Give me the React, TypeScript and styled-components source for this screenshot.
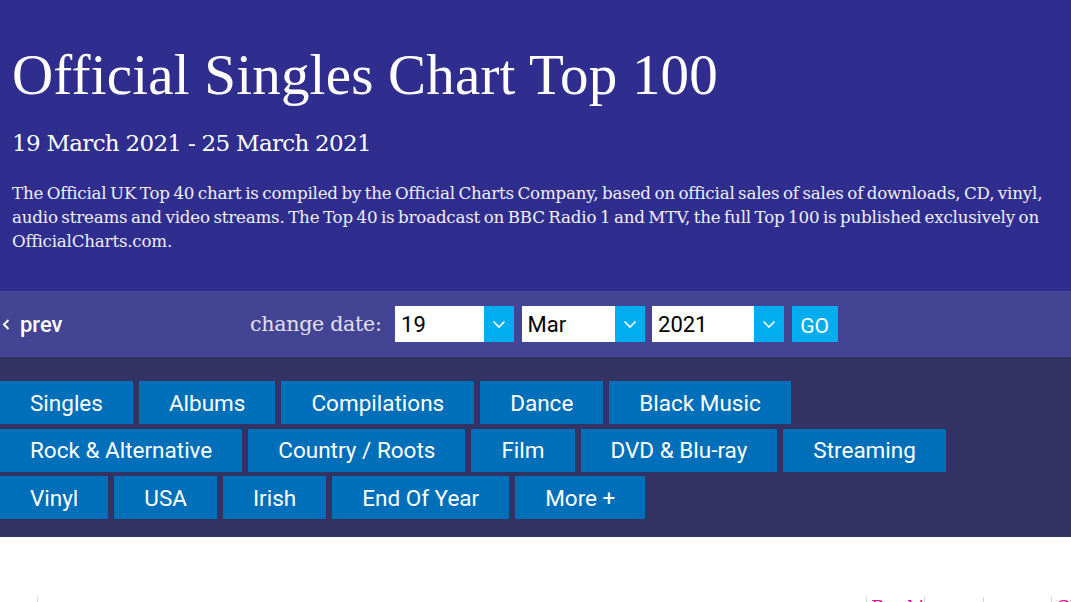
import React from 'react'
import styled, { createGlobalStyle } from 'styled-components'

const GlobalStyle = createGlobalStyle`
  html, body {
    margin: 0;
    padding: 0;
    background: #ffffff;
    overflow: hidden;
  }
  * { box-sizing: border-box; }
`

const Page = styled.div`
  width: 1071px;
  height: 602px;
  overflow: hidden;
  font-family: Roboto, "Liberation Sans", sans-serif;
`

// chart header
const Header = styled.header`
  background: #2f2e8f;
  padding: 44px 0 0 12px;
  height: 291px;
  color: #ffffff;
  font-family: "DejaVu Serif", serif;
`
const Title = styled.h1`
  margin: 0;
  font-family: "Liberation Serif", serif;
  font-size: 57px;
  font-weight: 400;
  line-height: 62px;
  letter-spacing: 0.2px;
`
const DateRange = styled.h2`
  margin: 22px 0 0 0;
  font-size: 23px;
  font-weight: 400;
  line-height: 30px;
  letter-spacing: -0.7px;
`
const Intro = styled.p`
  margin: 23px 0 0 0;
  font-size: 16.7px;
  line-height: 24px;
  color: #f0eef6;
  letter-spacing: -0.2px;
  word-spacing: -1.5px;
`

// date picker bar
const DateBar = styled.nav`
  height: 66px;
  background: #444494;
  display: flex;
  align-items: center;
`
const PrevLink = styled.a`
  flex: 0 0 250px;
  display: flex;
  align-items: center;
  gap: 10px;
  padding-left: 2px;
  color: #ffffff;
  font-size: 22px;
  font-weight: 500;
  text-decoration: none;
`
const DateForm = styled.form`
  display: flex;
  align-items: center;
  gap: 7.5px;
`
const DateLabel = styled.span`
  font-family: "DejaVu Serif", serif;
  font-size: 20.6px;
  color: #e2e0f0;
  margin-right: 6px;
  letter-spacing: -0.3px;
`
const SelectBox = styled.div<{ w: number }>`
  width: ${(p) => p.w}px;
  height: 36px;
  background: #ffffff;
  display: flex;
  align-items: center;
  justify-content: space-between;
`
const SelectValue = styled.span`
  padding-left: 6px;
  font-size: 22px;
  color: #000000;
`
const SelectArrow = styled.span`
  width: 30px;
  height: 36px;
  background: #00aeef;
  display: flex;
  align-items: center;
  justify-content: center;
`
const GoButton = styled.button`
  width: 46px;
  height: 36px;
  border: none;
  background: #00aeef;
  color: #ffffff;
  font-family: Roboto, "Liberation Sans", sans-serif;
  font-size: 21px;
  padding: 4px 0 0 0;
`

// category buttons
const Categories = styled.section`
  background: #333363;
  height: 180px;
  padding-top: 24px;
`
const CatRow = styled.div`
  display: flex;
  gap: 6px;
  margin-bottom: 4.5px;
`
const CatButton = styled.a`
  height: 43px;
  padding: 0 30px;
  background: #006fba;
  color: #ffffff;
  font-size: 22.5px;
  display: flex;
  align-items: center;
  justify-content: center;
  text-decoration: none;
`

// start of the next block, cut by the window
const TabStrip = styled.div`
  display: flex;
  height: 20px;
  margin-top: 60px;
`
const Tab = styled.span<{ w: number; first?: boolean }>`
  width: ${(p) => p.w}px;
  border-left: ${(p) => (p.first ? 'none' : '1px solid #d6d6d6')};
  color: #ec008c;
  font-family: "DejaVu Serif", serif;
  font-size: 18px;
  padding-left: 4px;
  line-height: 22px;
`

const Chevron = ({ dir }: { dir: 'down' | 'left' }) =>
  dir === 'down' ? (
    <svg width="14" height="9" viewBox="0 0 14 9">
      <path d="M1.5 1.5 L7 7 L12.5 1.5" stroke="#ffffff" strokeWidth="1.6" fill="none" />
    </svg>
  ) : (
    <svg width="8" height="11" viewBox="0 0 8 11">
      <path d="M6.5 1 L2 5.5 L6.5 10" stroke="#ffffff" strokeWidth="2" fill="none" />
    </svg>
  )

const rows = [
  ['Singles', 'Albums', 'Compilations', 'Dance', 'Black Music'],
  ['Rock & Alternative', 'Country / Roots', 'Film', 'DVD & Blu-ray', 'Streaming'],
  ['Vinyl', 'USA', 'Irish', 'End Of Year', 'More +'],
]

const selects = [
  { value: '19', w: 119 },
  { value: 'Mar', w: 123 },
  { value: '2021', w: 132 },
]

export default function App() {
  return (
    <Page>
      <GlobalStyle />
      <Header>
        <Title>Official Singles Chart Top 100</Title>
        <DateRange>19 March 2021 - 25 March 2021</DateRange>
        <Intro>
          The Official UK Top 40 chart is compiled by the Official Charts Company, based on official sales of sales of
          downloads, CD, vinyl, audio streams and video streams. The Top 40 is broadcast on BBC Radio 1 and MTV, the
          full Top 100 is published exclusively on OfficialCharts.com.
        </Intro>
      </Header>
      <DateBar>
        <PrevLink href="#">
          <Chevron dir="left" />
          prev
        </PrevLink>
        <DateForm>
          <DateLabel>change date:</DateLabel>
          {selects.map((s) => (
            <SelectBox key={s.value} w={s.w}>
              <SelectValue>{s.value}</SelectValue>
              <SelectArrow>
                <Chevron dir="down" />
              </SelectArrow>
            </SelectBox>
          ))}
          <GoButton type="button">GO</GoButton>
        </DateForm>
      </DateBar>
      <Categories>
        {rows.map((row, i) => (
          <CatRow key={i}>
            {row.map((c) => (
              <CatButton key={c} href="#">
                {c}
              </CatButton>
            ))}
          </CatRow>
        ))}
      </Categories>
      <TabStrip>
        <Tab w={37} first />
        <Tab w={831} />
        <Tab w={58}>Rankings</Tab>
        <Tab w={59} />
        <Tab w={68} />
        <Tab w={20}>Ch</Tab>
      </TabStrip>
    </Page>
  )
}
